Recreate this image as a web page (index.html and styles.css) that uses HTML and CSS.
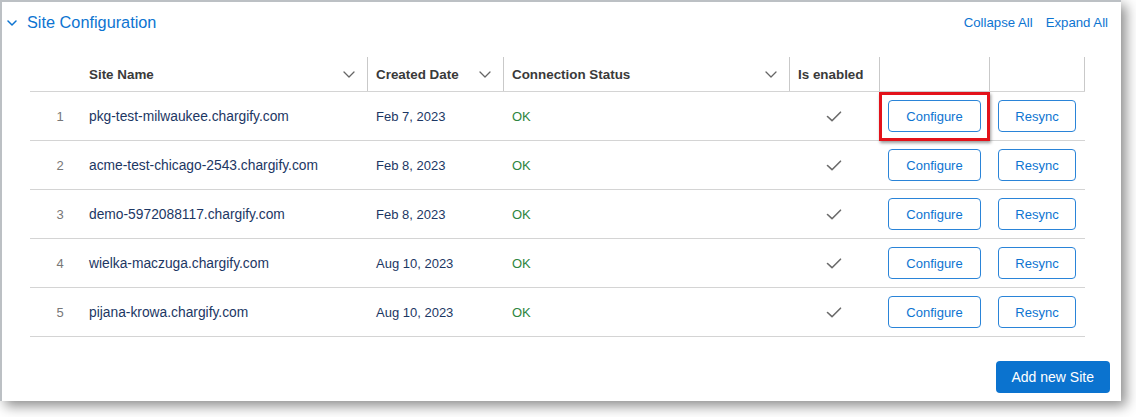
FILE: index.html
```html
<!DOCTYPE html>
<html lang="en">
<head>
    <meta charset="UTF-8">
    <meta name="viewport" content="width=device-width, initial-scale=1.0">
    <title>Site Configuration</title>
    <link rel="stylesheet" href="styles.css">
</head>
<body>
    <div class="panel">
        <!-- Section header -->
        <div class="panel-header">
            <div class="panel-title">
                <svg class="title-chevron" width="10" height="6" viewBox="0 0 10 6"><path d="M1 1l4 4 4-4" fill="none" stroke="#0d74d1" stroke-width="1.5" stroke-linecap="round" stroke-linejoin="round"/></svg>
                <h2>Site Configuration</h2>
            </div>
            <div class="panel-links">
                <a href="#">Collapse All</a>
                <a href="#">Expand All</a>
            </div>
        </div>

        <!-- Sites table -->
        <div class="sites-table">
            <div class="table-head">
                <div class="th"></div>
                <div class="th sortable">Site Name
                    <svg width="12" height="7" viewBox="0 0 12 7"><path d="M1 1l5 5 5-5" fill="none" stroke="#666" stroke-width="1.3" stroke-linecap="round" stroke-linejoin="round"/></svg>
                </div>
                <div class="th sortable sep">Created Date
                    <svg width="12" height="7" viewBox="0 0 12 7"><path d="M1 1l5 5 5-5" fill="none" stroke="#666" stroke-width="1.3" stroke-linecap="round" stroke-linejoin="round"/></svg>
                </div>
                <div class="th sortable sep">Connection Status
                    <svg width="12" height="7" viewBox="0 0 12 7"><path d="M1 1l5 5 5-5" fill="none" stroke="#666" stroke-width="1.3" stroke-linecap="round" stroke-linejoin="round"/></svg>
                </div>
                <div class="th sep">Is enabled</div>
                <div class="th sep"></div>
                <div class="th sep last"></div>
            </div>
            <div id="table-body"></div>
        </div>

        <div class="panel-footer">
            <button class="btn-primary">Add new Site</button>
        </div>
    </div>

    <script>
        const sites = [
            { name: "pkg-test-milwaukee.chargify.com", created: "Feb 7, 2023", status: "OK", enabled: true },
            { name: "acme-test-chicago-2543.chargify.com", created: "Feb 8, 2023", status: "OK", enabled: true },
            { name: "demo-5972088117.chargify.com", created: "Feb 8, 2023", status: "OK", enabled: true },
            { name: "wielka-maczuga.chargify.com", created: "Aug 10, 2023", status: "OK", enabled: true },
            { name: "pijana-krowa.chargify.com", created: "Aug 10, 2023", status: "OK", enabled: true }
        ];

        const checkIcon = '<svg width="16" height="11" viewBox="0 0 16 11"><path d="M1.5 5.5l4.5 4.2L14.5 1.2" fill="none" stroke="#6b6b6b" stroke-width="1.6" stroke-linecap="round" stroke-linejoin="round"/></svg>';

        const tableBody = document.getElementById('table-body');
        sites.forEach((site, i) => {
            // first row's Configure button is marked in the screenshot
            const mark = i === 0 ? ' highlight' : '';
            tableBody.innerHTML += `
                <div class="table-row">
                    <div class="td num">${i + 1}</div>
                    <div class="td site">${site.name}</div>
                    <div class="td date">${site.created}</div>
                    <div class="td status">${site.status}</div>
                    <div class="td enabled">${site.enabled ? checkIcon : ''}</div>
                    <div class="td action"><button class="btn-outline configure${mark}">Configure</button></div>
                    <div class="td action"><button class="btn-outline resync">Resync</button></div>
                </div>
            `;
        });
    </script>
</body>
</html>
```

FILE: styles.css
```css
:root {
    --blue: #0d74d1;
    --navy: #1c3764;
    --line: #d4d4d4;
    --head-text: #3a3a3a;
}

* {
    margin: 0;
    padding: 0;
    box-sizing: border-box;
    font-family: 'Liberation Sans', Arial, sans-serif;
}

body {
    background-color: #fff;
    min-height: 417px;
}

.panel {
    width: 1121px;
    background-color: #fff;
    border-left: 2px solid #bcc0c4;
    border-top: 2px solid #bcc0c4;
    box-shadow: 5px 5px 12px rgba(0, 0, 0, 0.45);
    padding-bottom: 8px;
}

.panel-header {
    height: 40px;
    display: flex;
    align-items: center;
    justify-content: space-between;
    padding: 0 13px 0 5px;
}

.panel-title {
    display: flex;
    align-items: center;
}

.title-chevron {
    margin-right: 10px;
    margin-top: 1px;
}

.panel-title h2 {
    font-size: 16.3px;
    font-weight: normal;
    color: var(--blue);
}

.panel-links {
    display: flex;
    gap: 13px;
}

.panel-links a {
    color: var(--blue);
    font-size: 13.2px;
    text-decoration: none;
}

.sites-table {
    width: 1055px;
    margin: 13px 0 0 28px;
}

.table-head,
.table-row {
    display: grid;
    grid-template-columns: 50px 287px 136px 286px 90px 110px 96px;
}

.table-head {
    padding-top: 2px;
    border-bottom: 1px solid var(--line);
}

.th {
    height: 34px;
    display: flex;
    align-items: center;
    padding: 0 9px;
    font-size: 13.4px;
    font-weight: bold;
    color: var(--head-text);
}

.th.sep {
    border-left: 1px solid #c9c9c9;
    padding-left: 8px;
}

.th.last {
    border-right: 1px solid #c9c9c9;
}

.th.sortable {
    justify-content: space-between;
    padding-right: 12px;
}

.table-row {
    height: 49px;
    border-bottom: 1px solid var(--line);
}

.td {
    display: flex;
    align-items: center;
    padding-left: 9px;
    font-size: 13px;
    color: var(--navy);
}

.td.site {
    font-size: 13.8px;
}

.td.num {
    justify-content: center;
    padding-left: 10px;
    color: #777;
}

.td.status {
    color: #2e8540;
}

.td.enabled {
    justify-content: center;
    padding-left: 0;
    padding-top: 1px;
}

.btn-outline {
    height: 32px;
    background-color: #fff;
    border: 1px solid #2a84d8;
    border-radius: 4px;
    color: var(--blue);
    font-size: 13px;
    cursor: pointer;
}

.configure {
    width: 93px;
}

.resync {
    width: 78px;
}

.highlight {
    position: relative;
}

.highlight::after {
    content: "";
    position: absolute;
    top: -9px;
    bottom: -10px;
    left: -10px;
    right: -10px;
    border: 3px solid #e3121a;
    box-shadow: 1px 2px 3px rgba(0, 0, 0, 0.4);
}

.panel-footer {
    display: flex;
    justify-content: flex-end;
    padding: 24px 11px 0 0;
}

.btn-primary {
    height: 32px;
    padding: 0 16px;
    background-color: #0b73cf;
    color: #fff;
    border: none;
    border-radius: 4px;
    font-size: 14px;
    cursor: pointer;
}
```
